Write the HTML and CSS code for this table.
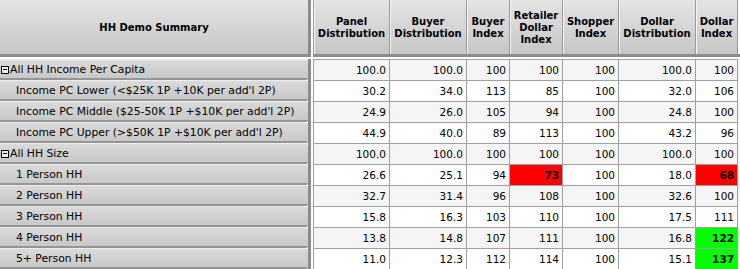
FILE: index.html
```html
<!DOCTYPE html>
<html>
<head>
<meta charset="utf-8">
<link rel="stylesheet" href="styles.css">
</head>
<body>
<div class="pivot">
  <div class="corner">HH Demo Summary</div>
  <div class="colhead">
    <div class="hc">Panel<br>Distribution</div>
    <div class="hc">Buyer<br>Distribution</div>
    <div class="hc">Buyer<br>Index</div>
    <div class="hc">Retailer<br>Dollar<br>Index</div>
    <div class="hc">Shopper<br>Index</div>
    <div class="hc">Dollar<br>Distribution</div>
    <div class="hc">Dollar<br>Index</div>
  </div>
  <div class="rowhead">
    <div class="lbl top"><span class="tog"></span>All HH Income Per Capita</div>
    <div class="lbl sub">Income PC Lower (&lt;$25K 1P +10K per add'l 2P)</div>
    <div class="lbl sub">Income PC Middle ($25-50K 1P +$10K per add'l 2P)</div>
    <div class="lbl sub">Income PC Upper (&gt;$50K 1P +$10K per add'l 2P)</div>
    <div class="lbl top"><span class="tog"></span>All HH Size</div>
    <div class="lbl sub">1 Person HH</div>
    <div class="lbl sub">2 Person HH</div>
    <div class="lbl sub">3 Person HH</div>
    <div class="lbl sub">4 Person HH</div>
    <div class="lbl sub">5+ Person HH</div>
  </div>
  <div class="data">
    <div class="r odd"><div>100.0</div><div>100.0</div><div>100</div><div>100</div><div>100</div><div>100.0</div><div>100</div></div>
    <div class="r"><div>30.2</div><div>34.0</div><div>113</div><div>85</div><div>100</div><div>32.0</div><div>106</div></div>
    <div class="r odd"><div>24.9</div><div>26.0</div><div>105</div><div>94</div><div>100</div><div>24.8</div><div>100</div></div>
    <div class="r"><div>44.9</div><div>40.0</div><div>89</div><div>113</div><div>100</div><div>43.2</div><div>96</div></div>
    <div class="r odd"><div>100.0</div><div>100.0</div><div>100</div><div>100</div><div>100</div><div>100.0</div><div>100</div></div>
    <div class="r"><div>26.6</div><div>25.1</div><div>94</div><div class="bad">73</div><div>100</div><div>18.0</div><div class="bad">68</div></div>
    <div class="r odd"><div>32.7</div><div>31.4</div><div>96</div><div>108</div><div>100</div><div>32.6</div><div>100</div></div>
    <div class="r"><div>15.8</div><div>16.3</div><div>103</div><div>110</div><div>100</div><div>17.5</div><div>111</div></div>
    <div class="r odd"><div>13.8</div><div>14.8</div><div>107</div><div>111</div><div>100</div><div>16.8</div><div class="good">122</div></div>
    <div class="r"><div>11.0</div><div>12.3</div><div>112</div><div>114</div><div>100</div><div>15.1</div><div class="good">137</div></div>
  </div>
</div>
</body>
</html>
```
FILE: styles.css
```css
html, body {
  margin: 0;
  padding: 0;
  background: #ffffff;
}
body {
  font-family: "DejaVu Sans", Verdana, sans-serif;
  color: #000;
  overflow: hidden;
}
.pivot {
  display: grid;
  grid-template-columns: 311px 427px;
  grid-template-rows: 57px auto;
  column-gap: 2px;
  row-gap: 2px;
}
.corner {
  box-sizing: border-box;
  height: 57px;
  border-right: 3px solid #8c8c8c;
  border-bottom: 3px solid #8c8c8c;
  background: linear-gradient(#e4e4e4, #c6c6c6);
  display: flex;
  align-items: center;
  justify-content: center;
  font-weight: bold;
  font-size: 10px;
  padding-top: 1px;
}
.colhead {
  display: grid;
  grid-template-columns: 76px 77px 43px 53px 56px 77px 43px;
  height: 57px;
  box-sizing: border-box;
  border-bottom: 3px solid #8c8c8c;
}
.hc {
  box-sizing: border-box;
  border-left: 1px solid #9a9a9a;
  box-shadow: inset 1px 0 0 #f4f4f4;
  background: linear-gradient(#e4e4e4, #c6c6c6);
  display: flex;
  align-items: center;
  justify-content: center;
  text-align: center;
  font-weight: bold;
  font-size: 10px;
  line-height: 12px;
  padding-top: 2px;
}
.hc:last-child {
  border-right: 1px solid #9a9a9a;
}
.rowhead {
  display: flex;
  flex-direction: column;
  border-right: 3px solid #8c8c8c;
}
.lbl {
  box-sizing: border-box;
  height: 21px;
  border-top: 1px solid #eeeeee;
  border-bottom: 2px solid #959595;
  border-radius: 0 2px 2px 0;
  background: linear-gradient(#dadada, #c8c8c8);
  font-size: 10.8px;
  line-height: 18px;
  padding-top: 1px;
  white-space: nowrap;
  display: flex;
  align-items: center;
}
.lbl.top {
  padding-left: 1px;
}
.lbl.sub {
  padding-left: 16px;
}
.tog {
  box-sizing: border-box;
  width: 8px;
  height: 8px;
  border: 1px solid #000;
  background: #f0f0f0;
  margin-right: 1px;
  display: flex;
  align-items: center;
  justify-content: center;
}
.tog::after {
  content: "";
  width: 4px;
  height: 1px;
  background: #000;
}
.data {
  display: flex;
  flex-direction: column;
}
.r {
  display: grid;
  grid-template-columns: 76px 77px 43px 53px 56px 77px 43px;
  height: 21px;
  background: #ffffff;
}
.r.odd {
  background: #f5f5f5;
}
.r > div {
  box-sizing: border-box;
  border-left: 1px solid #a0a0a0;
  border-top: 1px solid #a0a0a0;
  text-align: right;
  padding-right: 3px;
  font-size: 10.5px;
  line-height: 20px;
}
.r > div:last-child {
  border-right: 1px solid #a0a0a0;
}
.r > div.bad {
  background: #ff0000;
  font-weight: bold;
}
.r > div.good {
  background: #00ff00;
  font-weight: bold;
}
```
